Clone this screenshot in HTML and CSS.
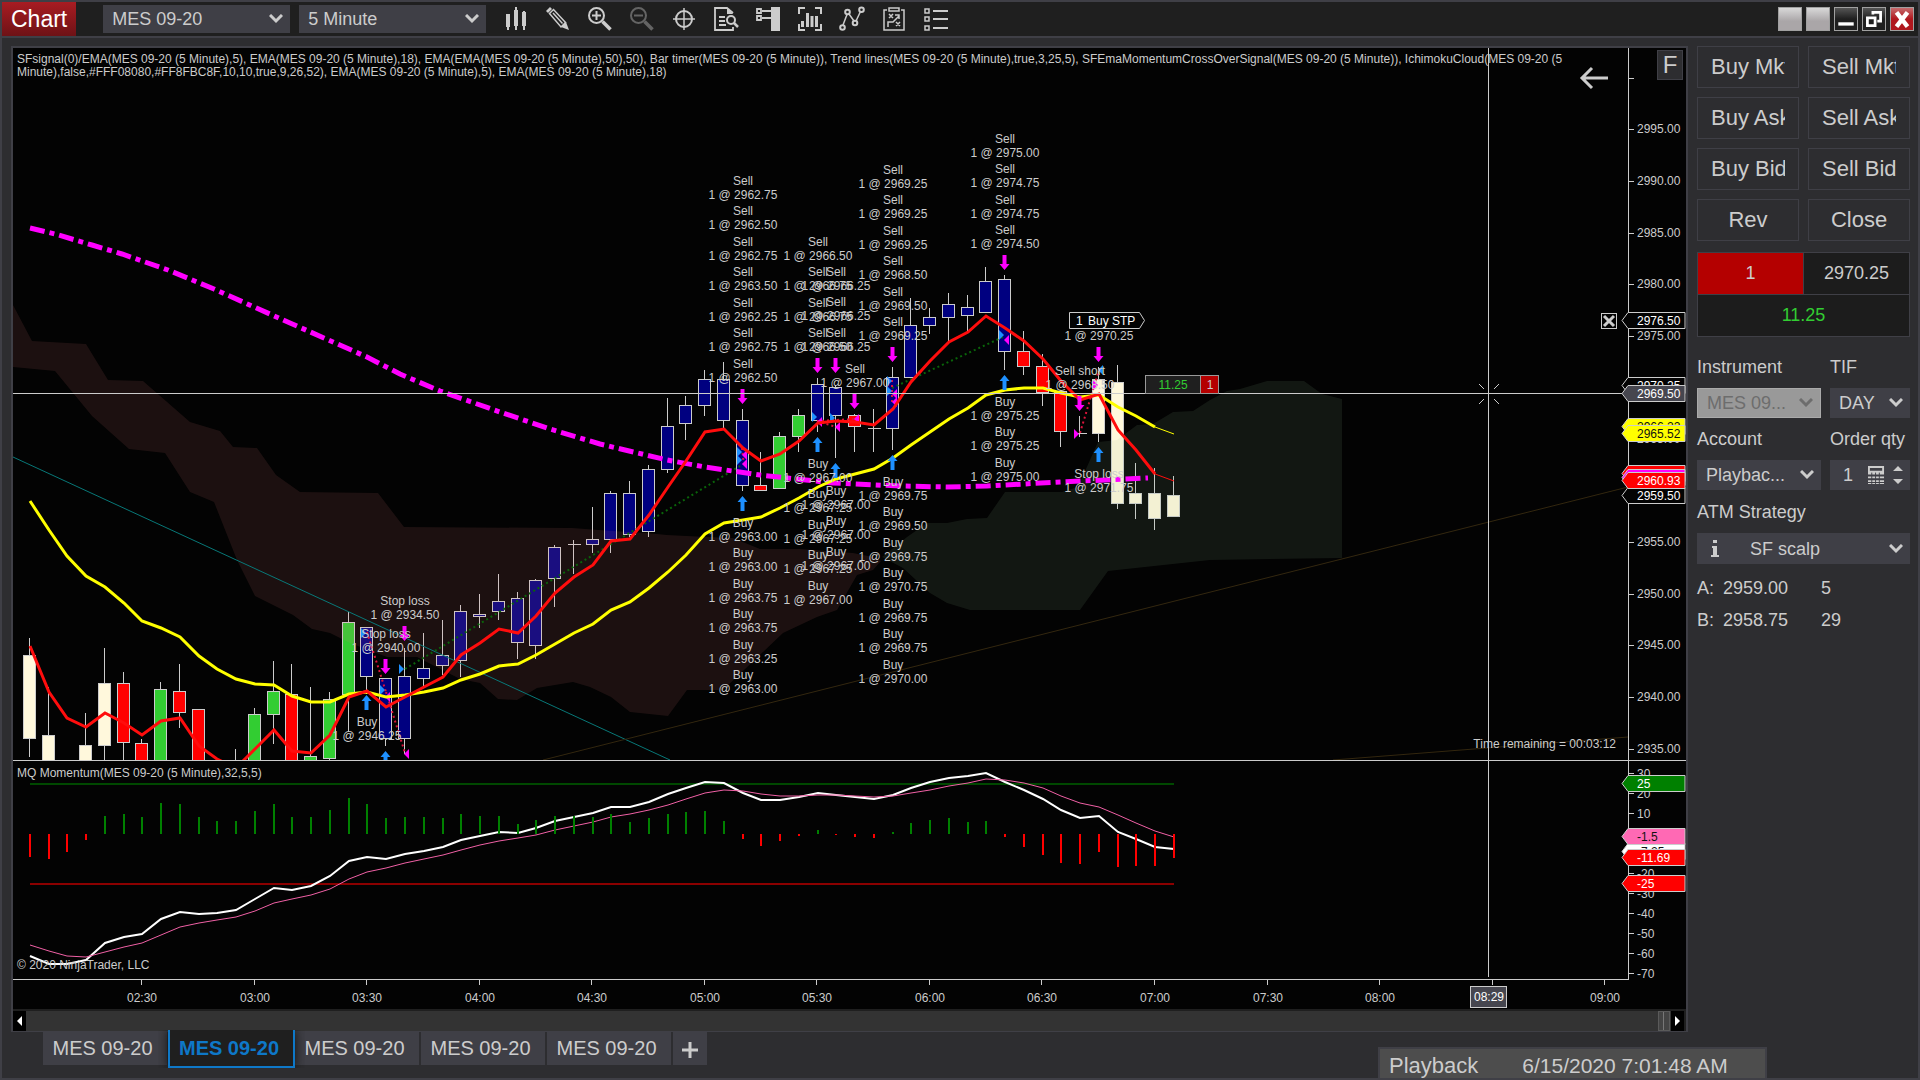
FILE: index.html
```html
<!DOCTYPE html>
<html lang="en">
<head>
    <meta charset="UTF-8">
    <title>Chart - MES 09-20</title>
    <meta name="viewport" content="width=device-width, initial-scale=1.0">

    <link rel="stylesheet" href="styles.css">
</head>
<body>

<header class="toolbar">
    <h1 class="title">Chart</h1>
    <select class="pick" aria-label="Instrument">
        <option>MES 09-20</option>
    </select>
    <select class="pick" aria-label="Interval">
        <option>5 Minute</option>
    </select>

    <nav class="tools">
        <button aria-label="Chart style">
            <svg viewBox="0 0 24 24"><path class="fill" d="M2 7h4v13H2zM10 3h4v16h-4zM18 5h4v14h-4zM3 20h2v3H3zM11 0h2v3h-2zM11 19h2v4h-2zM19 4h2v1h-2zM19 19h2v4h-2z"/></svg>
        </button>
        <button aria-label="Drawing tools">
            <svg viewBox="0 0 24 24"><path class="fill" d="M0 4l4-4 2 2-4 4z"/><path d="M3.500 6.500l4-4 12 13-4.500 4.500zM7 6l9.500 10.500" stroke-width="1.500"/><path class="fill" d="M15 20l5-5 3 8z"/></svg>
        </button>
        <button aria-label="Zoom in">
            <svg viewBox="0 0 24 24"><circle cx="8.500" cy="8.500" r="7.500"/><path d="M8.500 4v9M4 8.500h9"/><path d="M14.500 14.500l8 8" stroke-width="3.500"/></svg>
        </button>
        <button aria-label="Zoom out" disabled>
            <svg viewBox="0 0 24 24"><circle cx="8.500" cy="8.500" r="7.500"/><path d="M4 8.500h9"/><path d="M14.500 14.500l8 8" stroke-width="3.500"/></svg>
        </button>
        <button aria-label="Crosshair">
            <svg viewBox="0 0 24 24"><circle cx="12" cy="12" r="8"/><path d="M12 1v22M1 12h22" stroke-width="1.500"/></svg>
        </button>
        <button aria-label="Data box">
            <svg viewBox="0 0 24 24"><path d="M19 20v3H1V1h12l6 5M5 10h6M5 14h6M5 18h7" stroke-width="1.800"/><path class="fill" d="M13 1l6 6h-6z"/><circle cx="17" cy="13" r="4"/><path d="M20 16l4 4" stroke-width="2.500"/></svg>
        </button>
        <button aria-label="Chart trader">
            <svg viewBox="0 0 24 24"><path class="fill" d="M15 0h9v24h-9z"/><path d="M1 2h4v4H1zM1 9h4v4H1zM6 4h9M6 11h9" stroke-width="1.800"/></svg>
        </button>
        <button aria-label="Indicators">
            <svg viewBox="0 0 24 24"><path d="M7 1H1v6M17 1h6v6M7 23H1v-6M17 23h6v-6"/><path class="fill" d="M3 14h3v6H3zM8 6h3v14H8zM12.500 9h3v11h-3zM17 9h3v11h-3z"/></svg>
        </button>
        <button aria-label="Drawing objects">
            <svg viewBox="0 0 24 24"><path d="M3 18L7 7.500M9 7l5 7M16 14l4.500-9.500" stroke-width="1.500"/><circle cx="2.500" cy="20.500" r="2.300"/><circle cx="7.500" cy="5" r="2.300"/><circle cx="15" cy="16" r="2.300"/><circle cx="21.500" cy="2.800" r="2.300"/></svg>
        </button>
        <button aria-label="Strategies">
            <svg viewBox="0 0 24 24"><path d="M5 3H2v20h20V3h-3M7 1h10v3H7zM7 7l4 4M11 7l-4 4M14 15l4 4M18 15l-4 4M6 20v-5h5l6-6M13 8h4v4" stroke-width="1.500"/></svg>
        </button>
        <button aria-label="Properties">
            <svg viewBox="0 0 24 24"><path d="M1 2h4v4H1zM1 10h4v4H1zM1 19h4v4H1z" stroke-width="1.500"/><path d="M9 4h15M9 12h15M9 21h15" stroke-width="2.200"/></svg>
        </button>
    </nav>

    <div class="winbuttons">
        <button class="blank" aria-label="Link instrument"></button>
        <button class="blank" aria-label="Link interval"></button>
        <button class="min" aria-label="Minimize"><svg viewBox="0 0 20 20"><path class="fill" d="M3 13h14v3H3z"/></svg></button>
        <button class="max" aria-label="Restore"><svg viewBox="0 0 20 20"><path d="M9 6V4h7v8h-3M4 9h7v7H4z" stroke-width="2.500"/></svg></button>
        <button class="close" aria-label="Close"><svg viewBox="0 0 20 20"><path d="M5 4l10 13M15 4L5 17" stroke-width="4"/></svg></button>
    </div>
</header>

<main class="workspace">
    <section class="chartcol">
        <div class="chartbox">
            <svg id="chart" class="chart" viewBox="13 48 1673 961" role="img" aria-label="MES 09-20 5 minute chart"></svg>
            <div class="scroller">
                <button aria-label="Scroll left"><svg viewBox="0 0 13 20"><path d="M9 5v10L4 10z"/></svg></button>
                <div class="track"><span class="thumb"></span></div>
                <button aria-label="Scroll right"><svg viewBox="0 0 13 20"><path d="M4 5v10l5-5z"/></svg></button>
            </div>
        </div>
        <footer class="bottom">
            <div class="tabs">
                <button>MES 09-20</button>
                <button class="active">MES 09-20</button>
                <button>MES 09-20</button>
                <button>MES 09-20</button>
                <button>MES 09-20</button>
                <button class="add" aria-label="New tab"><svg viewBox="0 0 16 16"><path d="M8 0v16M0 8h16"/></svg></button>
            </div>
            <div class="playback">
                <span class="mode">Playback</span>
                <span>6/15/2020 7:01:48 AM</span>
            </div>
        </footer>
    </section>

    <aside class="trader">
        <div class="orders">
            <button><span>Buy Mkt</span></button>
            <button><span>Sell Mkt</span></button>
            <button><span>Buy Ask</span></button>
            <button><span>Sell Ask</span></button>
            <button><span>Buy Bid</span></button>
            <button><span>Sell Bid</span></button>
            <button><span>Rev</span></button>
            <button><span>Close</span></button>
        </div>

        <div class="position">
            <div class="short">1</div>
            <div>2970.25</div>
            <div class="pnl">11.25</div>
        </div>

        <div class="fields">
            <div class="field">
                <label for="instrument">Instrument</label>
                <select id="instrument" disabled><option>MES 09...</option></select>
            </div>
            <div class="field">
                <label for="tif">TIF</label>
                <select id="tif"><option>DAY</option></select>
            </div>
            <div class="field">
                <label for="account">Account</label>
                <select id="account"><option>Playbac...</option></select>
            </div>
            <div class="field">
                <label for="qty">Order qty</label>
                <div class="qty">
                    <input type="text" id="qty" value="1">
                    <button aria-label="Calculator"><svg viewBox="0 0 18 20"><path d="M1 1h15v5H1zM0 8h17M0 12h17M0 16h17M0 19h17" stroke-width="2"/><path class="cut" d="M4 7v13M8 7v13M12 7v13"/></svg></button>
                    <button aria-label="Change quantity"><svg viewBox="0 0 12 20"><path class="fill" d="M1 6l5-5 5 5zM1 14l5 5 5-5z"/></svg></button>
                </div>
            </div>
            <div class="field wide">
                <label for="atm">ATM Strategy</label>
                <div class="atm">
                    <svg class="info" viewBox="0 0 8 20"><path d="M2 1h4v3H2zM1 7h5v9h2v2H0v-2h2V9H1z"/></svg>
                    <select id="atm"><option>SF scalp</option></select>
                </div>
            </div>
        </div>

        <table class="quotes">
            <tr><td>A:</td><td>2959.00</td><td>5</td></tr>
            <tr><td>B:</td><td>2958.75</td><td>29</td></tr>
        </table>
    </aside>
</main>

<script src="chart.js"></script>

</body>
</html>
```
FILE: styles.css
```css
* {
    box-sizing: border-box;
}

body {
    margin: 0;
    min-height: 100vh;
    display: flex;
    flex-direction: column;
    background: #2d2d30;
    border: 2px solid #3f3f46;
    color: #cccccc;
    font-family: "Liberation Sans", Arial, sans-serif;
    font-size: 18px;
    overflow: hidden;
}

button, select, input {
    font: inherit;
    color: inherit;
    border: 0;
    padding: 0;
    border-radius: 0;
}

svg {
    fill: none;
    stroke: #cccccc;
    stroke-width: 2;
}

svg .fill {
    fill: #cccccc;
    stroke: none;
}

/* toolbar */

.toolbar {
    display: flex;
    align-items: center;
    height: 36px;
    background: #1f1f1f;
    border-bottom: 2px solid #3f3f46;
}

.title {
    align-self: stretch;
    margin: 0 27px 0 0;
    padding: 0 9px;
    background: linear-gradient(#a81c22, #6e1216);
    color: white;
    font-size: 23px;
    font-weight: normal;
    line-height: 34px;
}

select {
    appearance: none;
    background: #3f3f46 url("data:image/svg+xml,%3Csvg xmlns='http://www.w3.org/2000/svg' width='14' height='10'%3E%3Cpath d='M1 1l6 6 6-6' fill='none' stroke='%23cccccc' stroke-width='3'/%3E%3C/svg%3E") no-repeat right 7px center;
    height: 30px;
    padding: 0 24px 0 9px;
    opacity: 1;
}

.pick {
    width: 187px;
    height: 28px;
    margin-right: 9px;
}

.tools {
    display: flex;
    gap: 18px;
    margin-left: 9px;
}

.tools button {
    width: 24px;
    height: 24px;
    background: none;
}

.tools button:disabled {
    opacity: 0.4;
}

.tools svg {
    display: block;
    overflow: visible;
}

.winbuttons {
    display: flex;
    gap: 4px;
    margin-left: auto;
    padding-right: 4px;
}

.winbuttons button {
    width: 24px;
    height: 24px;
    border: 1px solid #a0a0a0;
    background: linear-gradient(#555555, #1f1f1f 50%);
}

.winbuttons .blank {
    background: linear-gradient(#d8d8d8, #aaa6a8 60%);
}

.winbuttons .close {
    background: linear-gradient(#c56a6c, #b0181e 50%);
}

.winbuttons svg {
    display: block;
    stroke: white;
}

.winbuttons svg .fill {
    fill: white;
}

/* chart column */

.workspace {
    flex: 1;
    display: grid;
    grid-template-columns: 1fr 230px;
    padding-top: 8px;
}

.chartcol {
    display: flex;
    flex-direction: column;
    padding-left: 9px;
}

.chartbox {
    border: 2px solid #3f3f46;
    border-bottom-width: 1px;
    background: #1f1f1f;
}

.chart {
    display: block;
    width: 100%;
    height: auto;
    background: #030303;
    font-size: 12px;
    stroke: none;
}

.chart text {
    fill: #cccccc;
}

.chart .mid {
    text-anchor: middle;
}

.chart .end {
    text-anchor: end;
}

.chart .crisp {
    shape-rendering: crispEdges;
}

.chart .white {
    fill: white;
}

.chart .dark {
    fill: #111111;
}

.chart .profit {
    fill: #32cd32;
}

.chart .key {
    font-size: 24px;
}

.scroller {
    display: flex;
    height: 22px;
    padding-top: 2px;
    padding-right: 2px;
}

.scroller button {
    width: 13px;
    background: black;
}

.scroller svg {
    display: block;
    fill: white;
    stroke: none;
}

.track {
    flex: 1;
    display: flex;
    justify-content: flex-end;
    background: #333333;
}

.thumb {
    width: 12px;
    margin-right: 1px;
    border: 1px solid #5a5a5a;
    background: linear-gradient(90deg, #444444 40%, #777777 40%, #777777 50%, #444444 50%);
}

.bottom {
    flex: 1;
    display: flex;
    justify-content: space-between;
    padding-left: 32px;
}

.tabs {
    display: flex;
    gap: 2px;
    height: 33px;
}

.tabs button {
    width: 124px;
    padding-right: 5px;
    background: #3f3f46;
    font-size: 20px;
}

.tabs .active {
    width: 127px;
    height: 38px;
    margin: -2px -2px 0 -1px;
    background: #1f1f1f;
    border: 2px solid #0e78c8;
    border-top: 0;
    color: #0e78c8;
    font-weight: bold;
    box-shadow: 0 0 10px #111111;
    clip-path: inset(0 -10px 0 -10px);
}

.tabs .add {
    width: 34px;
    padding: 0;
}

.add svg {
    width: 16px;
    vertical-align: middle;
    stroke-width: 3;
}

.playback {
    display: flex;
    align-self: flex-end;
    gap: 44px;
    width: 389px;
    height: 31px;
    padding: 0 9px;
    margin-right: -79px;
    background: #4d4d4d;
    border: 2px solid #3f3f46;
    border-bottom: 0;
    font-size: 21px;
    line-height: 34px;
    white-space: nowrap;
}

.playback .mode {
    font-size: 22px;
}

/* chart trader */

.trader {
    padding: 0 8px 0 9px;
}

.orders {
    display: grid;
    grid-template-columns: repeat(2, minmax(0, 1fr));
    gap: 9px;
}

.orders button {
    height: 42px;
    padding: 0 13px;
    background: #2d2d30;
    border: 1px solid #3f3f46;
    font-size: 22px;
}

.orders span {
    display: block;
    overflow: hidden;
    white-space: nowrap;
}

.position {
    display: grid;
    grid-template-columns: 1fr 1fr;
    gap: 1px;
    margin-top: 11px;
    border: 1px solid #3f3f46;
    background: #3f3f46;
    line-height: 41px;
    text-align: center;
}

.position div {
    background: #1c1c1c;
}

.position .short {
    background: #b40000;
}

.position .pnl {
    grid-column: span 2;
    color: #32cd32;
}

.fields {
    display: grid;
    grid-template-columns: 124px 80px;
    justify-content: space-between;
    row-gap: 11px;
    margin-top: 20px;
}

.wide {
    grid-column: span 2;
}

.field label {
    display: block;
    height: 31px;
    line-height: 20px;
    white-space: nowrap;
}

.field.wide label {
    height: 32px;
    line-height: 23px;
}

.field select {
    display: block;
    width: 100%;
}

.field select:disabled {
    background-color: #999999;
    border: 1px solid #aaaaaa;
    color: #6d6d6d;
    background-image: url("data:image/svg+xml,%3Csvg xmlns='http://www.w3.org/2000/svg' width='14' height='10'%3E%3Cpath d='M1 1l6 6 6-6' fill='none' stroke='%236d6d6d' stroke-width='3'/%3E%3C/svg%3E");
}

.qty {
    display: flex;
    align-items: center;
    gap: 7px;
    height: 30px;
    padding-right: 6px;
    background: #3f3f46;
}

.qty input {
    flex: 1;
    min-width: 0;
    padding-left: 13px;
    background: none;
}

.qty button {
    width: 17px;
    height: 20px;
    background: none;
}

.qty button + button {
    width: 12px;
}

.qty svg {
    display: block;
}

.qty .cut {
    stroke: #3f3f46;
    stroke-width: 1;
}

.atm {
    display: flex;
    align-items: center;
    height: 31px;
    background: #3f3f46;
}

.atm .info {
    width: 8px;
    margin: 0 22px 0 14px;
    fill: #cccccc;
    stroke: none;
}

.atm select {
    flex: 1;
}

.quotes {
    margin-top: 8px;
    border-collapse: collapse;
}

.quotes td {
    height: 32px;
    padding: 0;
}

.quotes td:first-child {
    width: 26px;
}

.quotes td:nth-child(2) {
    width: 98px;
}
```
FILE: chart.js
```js
const chart = document.getElementById("chart")

const STEP = 18.755
const LEFT = 29.4
const SPLIT = 760

const colors = {
    w: "#fff8dc",
    r: "#ff0000",
    g: "#32cd32",
    b: "#000080"
}

function x(i) {
    return Math.floor(LEFT + STEP * i)
}

function add(tag, attrs, text) {
    const el = document.createElementNS("http://www.w3.org/2000/svg", tag)
    for (const name in attrs) el.setAttribute(name, attrs[name])
    if (text !== undefined) el.textContent = text
    chart.appendChild(el)
    return el
}

function line(x1, y1, x2, y2, stroke, width = 1, extra = {}) {
    add("line", {x1, y1, x2, y2, stroke, "stroke-width": width, ...extra})
}

function crisp(x1, y1, x2, y2, stroke, width = 1) {
    line(x1, y1, x2, y2, stroke, width, {class: "crisp"})
}

function poly(points, stroke, width, extra = {}) {
    add("polyline", {points: points.join(" "), fill: "none", stroke, "stroke-width": width, ...extra})
}

function text(tx, ty, value, cls = "") {
    add("text", {x: tx, y: ty, class: cls}, value)
}

// bar index, high, body top, body bottom, low, color
const bars = [
    [0, 638, 655, 739, 757, "w"], [1, 687, 735, 780, 780, "w"], [3, 713, 745, 780, 780, "w"],
    [4, 648, 683, 746, 780, "w"], [5, 672, 683, 743, 780, "r"], [6, 739, 743, 780, 780, "r"],
    [7, 682, 689, 780, 780, "g"], [8, 664, 691, 713, 728, "r"], [9, 709, 709, 780, 780, "r"],
    [11, 749, 770, 780, 780, "g"], [12, 708, 714, 780, 780, "g"], [13, 661, 691, 715, 744, "g"],
    [14, 664, 694, 780, 780, "r"], [15, 687, 756, 780, 780, "g"], [16, 692, 699, 759, 765, "g"],
    [17, 612, 622, 695, 732, "g"], [18, 627, 627, 677, 694, "b"], [19, 678, 678, 739, 746, "b"],
    [20, 648, 676, 739, 754, "b"], [21, 633, 668, 679, 688, "b"], [22, 620, 655, 666, 675, "b"],
    [23, 605, 611, 661, 677, "b"], [24, 594, 614, 617, 628, "b"], [25, 574, 601, 612, 620, "b"],
    [26, 592, 598, 643, 659, "b"], [27, 579, 580, 646, 659, "b"], [28, 545, 547, 579, 607, "b"],
    [29, 540, 544, 544, 574, "b"], [30, 507, 539, 545, 553, "b"], [31, 491, 493, 540, 553, "b"],
    [32, 481, 493, 535, 537, "b"], [33, 465, 469, 532, 537, "b"], [34, 398, 426, 470, 473, "b"],
    [35, 396, 405, 424, 440, "b"], [36, 370, 379, 406, 416, "b"], [37, 362, 379, 421, 428, "b"],
    [38, 409, 420, 486, 491, "b"], [39, 452, 485, 491, 491, "r"], [40, 432, 436, 489, 489, "g"],
    [41, 409, 415, 437, 452, "g"], [42, 378, 384, 421, 432, "b"], [43, 385, 387, 416, 458, "b"],
    [44, 414, 415, 427, 452, "r"], [45, 409, 428, 428, 452, "b"], [46, 367, 377, 429, 450, "b"],
    [47, 298, 325, 378, 378, "b"], [48, 308, 317, 326, 334, "b"], [49, 293, 304, 318, 341, "b"],
    [50, 295, 307, 316, 331, "b"], [51, 267, 281, 313, 313, "b"], [52, 275, 279, 352, 370, "b"],
    [53, 331, 351, 367, 375, "r"], [54, 354, 366, 393, 406, "r"], [55, 391, 391, 432, 447, "r"],
    [56, 416, 433, 433, 437, "b"], [57, 367, 379, 434, 442, "w"], [58, 365, 382, 504, 509, "w"],
    [59, 463, 493, 504, 519, "w"], [60, 468, 493, 519, 530, "w"], [61, 476, 495, 517, 517, "w"]
]

for (const [i, high, top, bottom, low, color] of bars) {
    const c = x(i) + 0.5
    crisp(c, high, c, low, "#cccccc")
    if (top === bottom) {
        crisp(c - 6, top + 0.5, c + 7, top + 0.5, "#cccccc")
    } else {
        add("rect", {x: c - 6, y: top + 0.5, width: 12, height: bottom - top - 1, fill: colors[color], stroke: "#cccccc", "stroke-width": 1, class: "crisp"})
    }
}

// ichimoku cloud
add("polygon", {
    points: "13,305 32,341 86,344 108,380 143,381 190,422 220,431 233,447 257,448 276,475 300,492 378,493 404,527 572,528 613,531 647,533 667,535 707,537 733,538 760,549 800,549 853,553 873,557 881,561 873,570 857,575 837,610 817,617 783,633 723,690 687,690 668,716 630,712 611,697 590,687 573,682 537,688 517,700 498,699 480,683 460,679 417,657 387,657 350,643 330,633 312,629 293,615 255,596 237,560 214,502 190,492 165,453 129,449 92,416 55,371 13,367",
    fill: "#f08080", "fill-opacity": 0.11
})
add("polygon", {
    points: "882,557 907,537 927,523 947,523 967,519 987,518 1005,492 1062,492 1078,487 1098,442 1117,440 1137,425 1153,424 1173,412 1193,411 1210,400 1227,391 1240,389 1267,381 1304,381 1322,394 1342,399 1342,558 1210,560 1108,571 1080,610 970,610 947,603 930,593 903,568",
    fill: "#8fbc8f", "fill-opacity": 0.11
})

// trend lines
line(13, 457, 670, SPLIT, "#087878")
line(543, SPLIT, 1628, 487, "#33270f")
line(1333, SPLIT, 1628, 737, "#33270f")

// trades
const dots = {"stroke-dasharray": "2 3"}
line(405, 669, 740, 466, "#0a640a", 2, dots)
line(892, 388, 1003, 337, "#0a640a", 2, dots)
line(367, 632, 386, 692, "#dc143c", 2, dots)
line(386, 692, 405, 753, "#dc143c", 2, dots)
line(817, 421, 855, 419, "#dc143c", 2, dots)
line(817, 421, 836, 427, "#dc143c", 2, dots)
line(742, 448, 744, 466, "#dc143c", 2, dots)
line(892, 380, 892, 402, "#dc143c", 2, dots)
line(1080, 433, 1099, 370, "#dc143c", 2, dots)

// bar, y, 1 = points right / -1 = points left, color
const marks = [
    [18, 633, 1, "#1e90ff"], [19, 690, 1, "#1e90ff"], [20, 669, 1, "#1e90ff"], [19, 697, -1, "#ff00ff"], [20, 754, -1, "#ff00ff"],
    [38, 452, 1, "#1e90ff"], [38, 460, 1, "#1e90ff"], [38, 455, -1, "#ff00ff"], [38, 464, -1, "#ff00ff"],
    [42, 417, 1, "#1e90ff"], [42, 422, -1, "#ff00ff"], [43, 418, 1, "#1e90ff"], [43, 427, -1, "#ff00ff"], [44, 419, -1, "#ff00ff"],
    [46, 381, 1, "#1e90ff"], [46, 391, 1, "#1e90ff"], [46, 394, -1, "#ff00ff"], [46, 402, -1, "#ff00ff"],
    [52, 335, 1, "#1e90ff"], [52, 340, -1, "#ff00ff"], [56, 434, 1, "#ff00ff"], [57, 385, 1, "#ff00ff"], [57, 370, -1, "#1e90ff"]
]

for (const [i, y, dir, fill] of marks) {
    const c = x(i)
    add("polygon", {points: `${c},${y} ${c - 5 * dir},${y - 5} ${c - 5 * dir},${y + 5}`, fill})
}

// moving averages
poly([[30, 228], [55, 234], [92, 245], [122, 254], [168, 270], [214, 289], [290, 323], [367, 357], [400, 374], [440, 391], [500, 412], [550, 429], [600, 444], [667, 460], [705, 467], [760, 475], [833, 483], [900, 486], [947, 487], [987, 486], [1060, 482], [1148, 478]],
    "#ff00ff", 5, {"stroke-dasharray": "15 5 5 5"})

const fast = [646, 692, 718, 727, 713, 723, 735, 721, 718, 746, 759, 768, 749, 730, 751, 753, 735, 697, 691, 707, 697, 687, 677, 655, 643, 629, 633, 616, 593, 577, 565, 541, 539, 515, 487, 461, 432, 429, 448, 461, 454, 441, 423, 421, 422, 425, 409, 382, 361, 342, 332, 316, 328, 341, 359, 381, 400, 394, 430, 450, 474]
const slow = [501, 530, 556, 576, 587, 603, 621, 628, 637, 656, 669, 679, 684, 685, 696, 702, 702, 694, 692, 697, 695, 692, 688, 680, 674, 666, 664, 655, 644, 633, 624, 610, 602, 588, 572, 555, 534, 523, 520, 517, 508, 498, 487, 479, 474, 469, 458, 445, 432, 419, 408, 395, 390, 388, 388, 393, 397, 395, 407, 416, 427]

poly(slow.map((y, i) => [x(i) + 1, y]), "#ffff00", 3)
line(x(60) + 1, 427, x(61) + 1, 434, "#ffff00")
poly(fast.map((y, i) => [x(i) + 1, y]), "#ff0d0d", 3)
line(x(60) + 1, 474, x(61) + 1, 481, "#ff0d0d")

// order arrows
for (const [i, y] of [[38, 389], [42, 358], [43, 358], [44, 394], [46, 347], [52, 255], [19, 659], [20, 626], [57, 347], [56, 396]]) {
    const c = x(i) + 0.5
    add("path", {d: `M${c - 2} ${y}h4v9h3l-5 6-5-6h3z`, fill: "#ff00ff"})
}
for (const [i, y] of [[38, 496], [42, 437], [43, 463], [46, 455], [52, 375], [18, 695], [19, 751], [57, 447]]) {
    const c = x(i) + 0.5
    add("path", {d: `M${c} ${y}l5 6h-3v9h-4v-9h-3z`, fill: "#1e90ff"})
}

// bar, first baseline, caption, prices
const labels = [
    [38, 185, "Sell", ["2962.75", "2962.50", "2962.75", "2963.50", "2962.25", "2962.75", "2962.50"]],
    [42, 246, "Sell", ["2966.50", "2966.75", "2966.75", "2966.50"]],
    [43, 276, "Sell", ["2966.25", "2966.25", "2966.25"]],
    [44, 373, "Sell", ["2967.00"]],
    [46, 174, "Sell", ["2969.25", "2969.25", "2969.25", "2968.50", "2969.50", "2969.25"]],
    [52, 143, "Sell", ["2975.00", "2974.75", "2974.75", "2974.50"]],
    [38, 527, "Buy", ["2963.00", "2963.00", "2963.75", "2963.75", "2963.25", "2963.00"]],
    [42, 468, "Buy", ["2967.00", "2967.25", "2967.25", "2967.25", "2967.00"]],
    [43, 495, "Buy", ["2967.00", "2967.00", "2967.00"]],
    [46, 486, "Buy", ["2969.75", "2969.50", "2969.75", "2970.75", "2969.75", "2969.75", "2970.00"]],
    [52, 406, "Buy", ["2975.25", "2975.25", "2975.00"]],
    [20, 605, "Stop loss", ["2934.50"]],
    [19, 638, "Stop loss", ["2940.00"]],
    [18, 726, "Buy", ["2946.25"]],
    [57, 326, "", ["2970.25"]],
    [56, 375, "Sell short", ["2968.50"]],
    [57, 478, "Stop loss", ["2971.75"]]
]

for (const [i, y, caption, prices] of labels) {
    prices.forEach((price, n) => {
        const top = Math.floor(y + n * 30.5)
        if (caption) text(x(i) + 1, top, caption, "mid")
        text(x(i) + 1, top + 14, "1 @ " + price, "mid")
    })
}

// lower panel
add("rect", {x: 13, y: SPLIT, width: 1673, height: 249, fill: "#030303"})
crisp(30, 784, 1174, 784, "#004800", 2)
crisp(30, 884, 1174, 884, "#8b0000", 2)

const momentum = [956, 964, 964, 960, 943, 937, 934, 919, 912, 914, 913, 910, 899, 888, 890, 886, 876, 861, 857, 859, 854, 851, 847, 840, 836, 832, 833, 828, 821, 817, 813, 807, 807, 802, 794, 788, 782, 783, 793, 800, 800, 797, 793, 795, 797, 799, 795, 788, 782, 778, 776, 773, 782, 790, 799, 810, 818, 816, 832, 839, 847, 849]
const average = [945, 951, 956, 957, 952, 947, 943, 935, 927, 923, 920, 917, 911, 903, 899, 895, 889, 879, 872, 868, 863, 859, 855, 850, 845, 841, 838, 835, 830, 826, 822, 817, 814, 810, 805, 799, 793, 790, 791, 794, 796, 796, 795, 795, 796, 797, 796, 793, 790, 786, 783, 779, 780, 783, 788, 796, 803, 807, 815, 823, 831, 837]
const histogram = [857, 859, 852, 840, 816, 814, 817, 803, 804, 817, 821, 821, 811, 804, 817, 817, 810, 798, 804, 818, 817, 817, 818, 814, 816, 816, 824, 820, 816, 816, 817, 814, 822, 818, 814, 812, 811, 821, 839, 846, 841, 836, 830, 835, 837, 838, 832, 823, 820, 818, 822, 821, 837, 847, 855, 863, 864, 852, 867, 866, 866, 858]

poly(momentum.map((y, i) => [x(i) + 1, y]), "#ffffff", 2)
poly(average.map((y, i) => [x(i) + 1, y]), "#f060a5", 1)
histogram.forEach((y, i) => crisp(x(i) + 1, 834, x(i) + 1, y, y < 834 ? "#008000" : "#ff0000", 2))

// axes
crisp(13, SPLIT + 0.5, 1686, SPLIT + 0.5, "#cccccc")
crisp(13, 979.5, 1629, 979.5, "#cccccc")
crisp(1628.5, 48, 1628.5, 980, "#cccccc")

for (let price = 3000; price >= 2935; price -= 5) {
    const y = Math.round(129.3 + (2995 - price) * 10.32)
    crisp(1629, y + 0.5, 1634, y + 0.5, "#cccccc")
    if (price < 3000 && price !== 2970 && price !== 2960) text(1637, y + 4, price.toFixed(2))
}

for (let value = 30; value >= -70; value -= 10) {
    const y = 834 - value * 2
    crisp(1629, y - 0.5, 1634, y - 0.5, "#cccccc")
    if (value !== 0 && value !== -10) text(1637, y + 4, value)
}

for (let n = 0; n < 14; n++) {
    const tx = Math.floor(141.7 + n * 112.53)
    const minutes = 150 + n * 30
    crisp(tx + 0.5, 980, tx + 0.5, 985, "#cccccc")
    if (n === 12) continue
    text(tx + 1, 1002, String(Math.floor(minutes / 60)).padStart(2, "0") + ":" + String(minutes % 60).padStart(2, "0"), "mid")
}

// crosshair
crisp(13, 393.5, 1628, 393.5, "#cccccc")
crisp(1488.5, 48, 1488.5, 977, "#cccccc")
for (const [dx, dy] of [[-1, -1], [1, -1], [-1, 1], [1, 1]]) {
    line(1489 + dx * 5, 394 + dy * 5, 1489 + dx * 10, 394 + dy * 10, "#cccccc", 1)
}

// price markers: top, value, background, text class
const tags = [
    [312, "2976.50", "#030303", "white"], [377, "2970.25", "#030303", "white"], [385, "2969.50", "#46464f", "white"],
    [418, "2966.22", "#ffff00", "dark"], [425, "2965.52", "#ffff00", "dark"],
    [465, "", "#ff0000", "white"], [469, "", "#ff00ff", "white"], [487, "2959.50", "#030303", "white"], [472, "2960.93", "#ff0000", "white"],
    [775, "25", "#008000", "white"], [843, "-7.25", "#ffffff", "dark"], [828, "-1.5", "#ff69b4", "dark"], [849, "-11.69", "#ff0000", "white"], [875, "-25", "#ff0000", "white"]
]

for (const [y, value, fill, cls] of tags) {
    add("path", {d: `M1622 ${y + 8.5}l6-8h57v16h-57z`, fill, stroke: "#cccccc", "stroke-width": 1})
    if (value) text(1637, y + 13, value, cls)
}

add("rect", {x: 1470.5, y: 986.5, width: 36, height: 21, fill: "#46464f", stroke: "#cccccc", "stroke-width": 1})
text(1489, 1001, "08:29", "mid white")

// open order and position
add("path", {d: "M1069.500 312.500h70l5 8-5 8h-70z", fill: "#030303", stroke: "#cccccc", "stroke-width": 1})
text(1076, 325, "1", "white")
text(1088, 325, "Buy STP", "white")

add("rect", {x: 1145.5, y: 375.5, width: 55, height: 18, fill: "#1f1f1f", stroke: "#999999", "stroke-width": 1})
add("rect", {x: 1200.5, y: 375.5, width: 18, height: 18, fill: "#b40000", stroke: "#999999", "stroke-width": 1})
text(1173, 389, "11.25", "mid profit")
text(1210, 389, "1", "mid")

add("rect", {x: 1601.5, y: 313.5, width: 15, height: 15, fill: "#030303", stroke: "#cccccc", "stroke-width": 1})
add("path", {d: "M1604 316l10 10M1614 316l-10 10", stroke: "#cccccc", "stroke-width": 3})

// captions
text(17, 63, "SFsignal(0)/EMA(MES 09-20 (5 Minute),5), EMA(MES 09-20 (5 Minute),18), EMA(EMA(MES 09-20 (5 Minute),50),50), Bar timer(MES 09-20 (5 Minute)), Trend lines(MES 09-20 (5 Minute),true,3,25,5), SFEmaMomentumCrossOverSignal(MES 09-20 (5 Minute)), IchimokuCloud(MES 09-20 (5")
text(17, 76, "Minute),false,#FFF08080,#FF8FBC8F,10,10,true,9,26,52), EMA(MES 09-20 (5 Minute),5), EMA(MES 09-20 (5 Minute),18)")
text(17, 777, "MQ Momentum(MES 09-20 (5 Minute),32,5,5)")
text(17, 969, "© 2020 NinjaTrader, LLC")
text(1616, 748, "Time remaining = 00:03:12", "end")

add("path", {d: "M1608 78h-25M1592 68l-10 10 10 10", fill: "none", stroke: "#cccccc", "stroke-width": 3})
add("rect", {x: 1657.5, y: 50.5, width: 25, height: 29, fill: "#2d2d30", stroke: "#3f3f46", "stroke-width": 1})
text(1670, 73, "F", "mid key")
```
